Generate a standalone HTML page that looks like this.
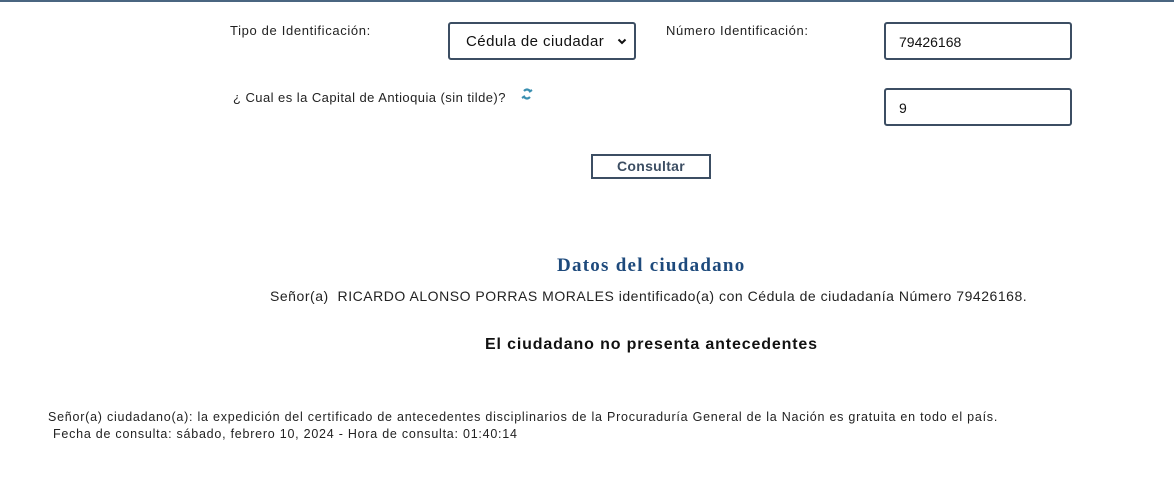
<!DOCTYPE html>
<html><head><style>
body{margin:0;width:1174px;height:480px;background:#fff;font-family:"Liberation Sans","DejaVu Sans",sans-serif;color:#222;position:relative;overflow:hidden}
.a{position:absolute;white-space:nowrap}
.s{font-size:13px}
.box{position:absolute;border:2px solid #3c4e63;border-radius:3px;background:#fff;box-sizing:border-box;font-size:14px;color:#111}
</style></head><body>
<div class="a" style="left:0;top:0;width:1174px;height:2px;background:#4a6580"></div>
<div class="a s" style="left:230px;top:23px;letter-spacing:0.65px">Tipo de Identificación:</div>
<div class="box" style="left:448px;top:22px;width:188px;height:38px;padding:9px 0 0 16px;font-size:15px;letter-spacing:0.45px">Cédula de ciudadar<svg style="position:absolute;right:7px;top:14px" width="10" height="7" viewBox="0 0 10 7"><path d="M1.5 1.5 L5 5 L8.5 1.5" stroke="#111" stroke-width="2" fill="none"/></svg></div>
<div class="a s" style="left:666px;top:23px;letter-spacing:0.6px">Número Identificación:</div>
<div class="box" style="left:884px;top:22px;width:188px;height:38px;padding:10px 0 0 13px">79426168</div>
<div class="a s" style="left:233px;top:90px;letter-spacing:0.45px">¿ Cual es la Capital de Antioquia (sin tilde)?</div>
<svg class="a" style="left:521px;top:87px" width="12" height="14" viewBox="0 0 12 14"><path d="M3 4 Q6 1 9 4" stroke="#3a8fb0" stroke-width="2.2" fill="none"/><path d="M9 10 Q6 13 3 10" stroke="#3a8fb0" stroke-width="2.2" fill="none"/><path d="M8 5 L11 3" stroke="#3a8fb0" stroke-width="2"/><path d="M4 9 L1 11" stroke="#3a8fb0" stroke-width="2"/></svg>
<div class="box" style="left:884px;top:88px;width:188px;height:38px;padding:10px 0 0 13px">9</div>
<div class="a" style="left:591px;top:154px;width:120px;height:25px;border:2px solid #3c4e63;box-sizing:border-box;text-align:center;font-size:14px;font-weight:bold;color:#3c4e63;line-height:21px;letter-spacing:0.3px">Consultar</div>
<div class="a" style="left:557px;top:255px;font-family:'Liberation Serif',serif;font-weight:bold;font-size:19px;color:#1e4a7c;letter-spacing:1.25px">Datos del ciudadano</div>
<div class="a" style="left:270px;top:288px;font-size:14px;letter-spacing:0.53px">Señor(a)&nbsp; RICARDO ALONSO PORRAS MORALES identificado(a) con Cédula de ciudadanía Número 79426168.</div>
<div class="a" style="left:485px;top:336px;font-size:16px;font-weight:bold;color:#111;letter-spacing:0.85px">El ciudadano no presenta antecedentes</div>
<div class="a" style="left:48px;top:410px;font-size:12.5px;letter-spacing:0.76px">Señor(a) ciudadano(a): la expedición del certificado de antecedentes disciplinarios de la Procuraduría General de la Nación es gratuita en todo el país.</div>
<div class="a" style="left:53px;top:427px;font-size:12.5px;letter-spacing:0.76px">Fecha de consulta: sábado, febrero 10, 2024 - Hora de consulta: 01:40:14</div>
</body></html>
